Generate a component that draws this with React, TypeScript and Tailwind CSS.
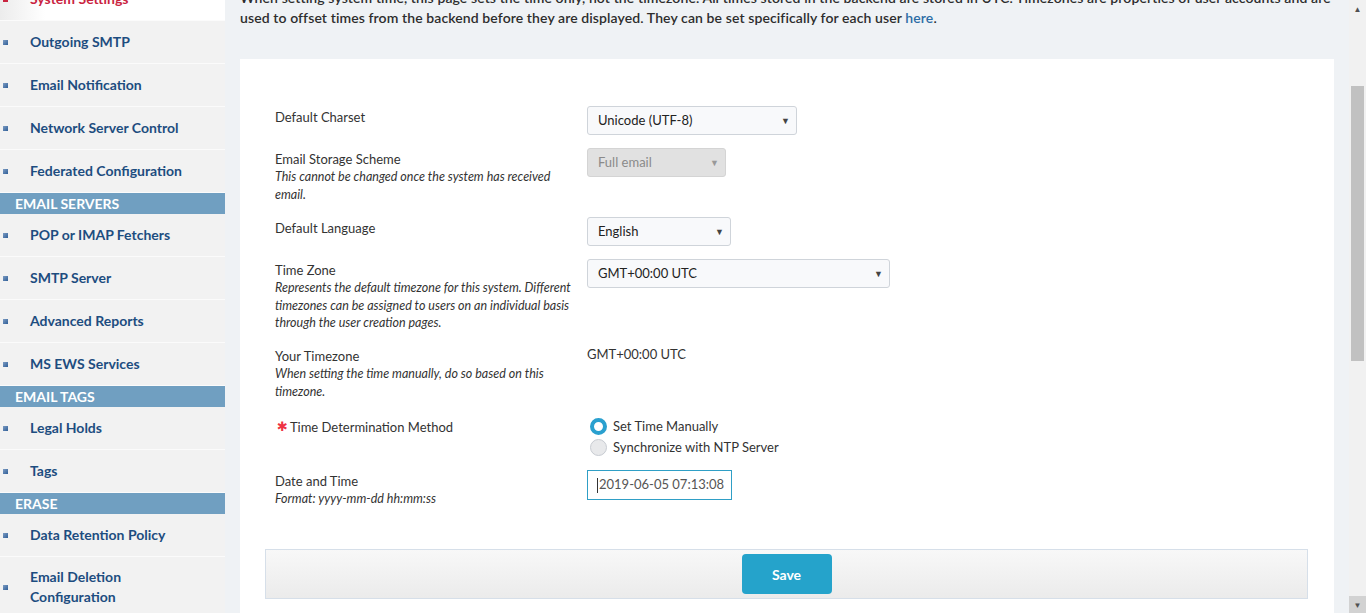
import React from "react";

type NavItem = { label: string; active?: boolean };
type NavGroup = { title?: string; items: NavItem[] };

const groups: NavGroup[] = [
  {
    items: [
      { label: "System Settings", active: true },
      { label: "Outgoing SMTP" },
      { label: "Email Notification" },
      { label: "Network Server Control" },
      { label: "Federated Configuration" },
    ],
  },
  {
    title: "Email Servers",
    items: [
      { label: "POP or IMAP Fetchers" },
      { label: "SMTP Server" },
      { label: "Advanced Reports" },
      { label: "MS EWS Services" },
    ],
  },
  {
    title: "Email Tags",
    items: [{ label: "Legal Holds" }, { label: "Tags" }],
  },
  {
    title: "Erase",
    items: [{ label: "Data Retention Policy" }, { label: "Email Deletion Configuration" }],
  },
];

function Sidebar() {
  return (
    <aside className="w-[225px] shrink-0 bg-[#f2f2f2] -mt-[22px] font-['Lato',sans-serif]">
      {groups.map((g, gi) => (
        <div key={gi}>
          {g.title && (
            <div className="h-[21px] bg-[#709fc1] pl-[15px] text-[14px] font-bold uppercase leading-[21px] text-white">
              {g.title}
            </div>
          )}
          {g.items.map((it) => (
            <div
              key={it.label}
              className={
                "flex items-center border-b border-[#fbfbfb] " +
                (it.label === "Email Deletion Configuration" ? "py-[10px] " : "h-[43px] ") +
                (it.active ? "bg-gradient-to-r from-[#ececec] via-white via-[20%] to-white" : "")
              }
            >
              <span
                className={
                  "ml-[3px] h-[5px] w-[5px] shrink-0 " +
                  (it.active ? "bg-[#c9243f]" : "bg-gradient-to-br from-[#7d9cc2] to-[#2f5f98]")
                }
              />
              <span
                className={
                  "ml-[22px] w-[170px] text-[14px] font-bold leading-[20px] " +
                  (it.active ? "text-[#c9243f]" : "text-[#1d4d80]")
                }
              >
                {it.label === "Email Deletion Configuration" ? (
                  <>
                    Email Deletion
                    <br />
                    Configuration
                  </>
                ) : (
                  it.label
                )}
              </span>
            </div>
          ))}
        </div>
      ))}
    </aside>
  );
}

function Select({ value, width, disabled }: { value: string; width: string; disabled?: boolean }) {
  return (
    <div
      className={
        "flex h-[29px] items-center justify-between rounded-[3px] border pl-[10px] pr-[6px] text-[13px] " +
        width +
        (disabled
          ? " border-[#d4d4d4] bg-[#e1e1e1] text-[#8a8a8a]"
          : " border-[#cfd4da] bg-[#f8f9fb] text-[#222]")
      }
    >
      <span>{value}</span>
      <span className={"text-[9px] " + (disabled ? "text-[#999]" : "text-[#444]")}>▼</span>
    </div>
  );
}

function Row({
  label,
  help,
  required,
  children,
  className = "",
}: {
  label: string;
  help?: string[];
  required?: boolean;
  children: React.ReactNode;
  className?: string;
}) {
  return (
    <div className={"flex " + className}>
      <div className="w-[312px] shrink-0 pt-[2px]">
        <div className="flex items-center text-[13px] leading-[18px] text-[#333]">
          {required && (
            <span className="mr-[2px] ml-[2px] font-['DejaVu_Sans',sans-serif] text-[13px] leading-[18px] text-[#ee3344]">
              ✱
            </span>
          )}
          {label}
        </div>
        {help && (
          <div className="whitespace-nowrap text-[12.5px] italic leading-[17.5px] text-[#333]">
            {help.map((line, i) => (
              <div key={i}>{line}</div>
            ))}
          </div>
        )}
      </div>
      <div>{children}</div>
    </div>
  );
}

function Radio({ checked, label }: { checked?: boolean; label: string }) {
  return (
    <div className="flex h-[21px] items-center">
      <span
        className={
          "ml-[3px] h-[17px] w-[17px] rounded-full " +
          (checked ? "border-[4px] border-[#2aa0cf] bg-white" : "border border-[#c8ccd2] bg-[#e8e9eb]")
        }
      />
      <span className="ml-[6px] text-[13px] text-[#333]">{label}</span>
    </div>
  );
}

export default function App() {
  return (
    <div className="flex h-[613px] w-[1366px] overflow-hidden bg-[#eff2f5] font-['Lato',sans-serif]">
      <Sidebar />
      <main className="ml-[15px] flex w-[1094px] shrink-0 flex-col">
        <p className="-mt-[12px] text-[14px] font-semibold leading-[20px] tracking-[0.1px] text-[#2d2d2d]">
          When setting system time, this page sets the time only, not the timezone. All times stored in the backend are
          stored in UTC. Timezones are properties of user accounts and are used to offset times from the backend before
          they are displayed. They can be set specifically for each user <span className="text-[#2c6ca5]">here</span>.
        </p>
        <section className="mt-[31px] flex-1 bg-white pl-[35px] pt-[47px]">
          <div className="flex flex-col">
            <Row label="Default Charset" className="h-[42px]">
              <Select value="Unicode (UTF-8)" width="w-[210px]" />
            </Row>
            <Row
              label="Email Storage Scheme"
              help={["This cannot be changed once the system has received", "email."]}
              className="h-[69px]"
            >
              <Select value="Full email" width="w-[139px]" disabled />
            </Row>
            <Row label="Default Language" className="h-[42px]">
              <Select value="English" width="w-[144px]" />
            </Row>
            <Row
              label="Time Zone"
              help={[
                "Represents the default timezone for this system. Different",
                "timezones can be assigned to users on an individual basis",
                "through the user creation pages.",
              ]}
              className="h-[86px]"
            >
              <Select value="GMT+00:00 UTC" width="w-[303px]" />
            </Row>
            <Row
              label="Your Timezone"
              help={["When setting the time manually, do so based on this", "timezone."]}
              className="h-[71px]"
            >
              <div className="text-[13px] leading-[18px] text-[#333]">GMT+00:00 UTC</div>
            </Row>
            <Row label="Time Determination Method" required className="h-[54px]">
              <div>
                <Radio checked label="Set Time Manually" />
                <Radio label="Synchronize with NTP Server" />
              </div>
            </Row>
            <Row label="Date and Time" help={["Format: yyyy-mm-dd hh:mm:ss"]} className="h-[79px]">
              <div className="flex h-[30px] w-[145px] items-center border border-[#2f9fc6] pl-[9px] text-[13px] text-[#555]">
                <span className="mr-[1px] h-[15px] w-px bg-[#333]" />
                2019-06-05 07:13:08
              </div>
            </Row>
          </div>
          <div className="mr-[26px] -ml-[10px] flex h-[50px] items-center justify-center border border-[#d6dfe9] bg-gradient-to-b from-[#f8f8f8] to-[#ebebeb]">
            <button className="h-[40px] w-[90px] rounded-[4px] bg-[#25a3cb] text-[14px] font-bold text-white">
              Save
            </button>
          </div>
        </section>
      </main>
      <div className="ml-[15px] flex w-[17px] shrink-0 flex-col bg-[#f1f1f1]">
        <div className="flex h-[17px] items-center justify-center text-[8px] text-[#505050]">▲</div>
        <div className="mx-[2px] mt-[69px] h-[275px] bg-[#c1c1c1]" />
        <div className="flex-1" />
        <div className="flex h-[17px] items-center justify-center bg-[#d2d2d2] text-[8px] text-[#505050]">▼</div>
      </div>
    </div>
  );
}
